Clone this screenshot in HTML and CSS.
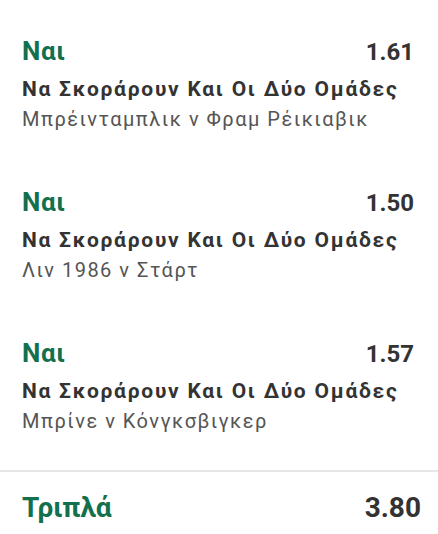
FILE: index.html
```html
<!DOCTYPE html>
<html lang="el">
<head>
  <meta charset="UTF-8">
  <meta name="viewport" content="width=device-width, initial-scale=1.0">
  <title>Δελτίο</title>
  <link rel="stylesheet" href="styles.css">
</head>
<body>
  <div class="bets">
    <div class="bet">
      <div class="bet-top">
        <span class="pick">Ναι</span>
        <span class="odds">1.61</span>
      </div>
      <div class="market">Να Σκοράρουν Και Οι Δύο Ομάδες</div>
      <div class="match">Μπρέινταμπλικ ν Φραμ Ρέικιαβικ</div>
    </div>
    <div class="bet">
      <div class="bet-top">
        <span class="pick">Ναι</span>
        <span class="odds">1.50</span>
      </div>
      <div class="market">Να Σκοράρουν Και Οι Δύο Ομάδες</div>
      <div class="match">Λιν 1986 ν Στάρτ</div>
    </div>
    <div class="bet">
      <div class="bet-top">
        <span class="pick">Ναι</span>
        <span class="odds">1.57</span>
      </div>
      <div class="market">Να Σκοράρουν Και Οι Δύο Ομάδες</div>
      <div class="match">Μπρίνε ν Κόνγκσβιγκερ</div>
    </div>
  </div>
  <div class="total">
    <span class="total-name">Τριπλά</span>
    <span class="total-odds">3.80</span>
  </div>
</body>
</html>
```

FILE: styles.css
```css
body {
  margin: 0;
  background-color: #ffffff;
  font-family: Roboto, 'Noto Sans', sans-serif;
  color: #333333;
}

.bets {
  padding: 36px 24px 35px 22px;
  border-bottom: 2px solid #e6e6e6;
}

.bet + .bet {
  margin-top: 54px;
}

.bet-top {
  display: flex;
  justify-content: space-between;
  align-items: baseline;
  line-height: 30px;
}

.pick {
  font-size: 26px;
  font-weight: bold;
  letter-spacing: 0.6px;
  color: #13704f;
}

.odds {
  font-size: 24px;
  font-weight: bold;
}

.market {
  margin-top: 8px;
  font-size: 21px;
  font-weight: bold;
  line-height: 28px;
  letter-spacing: 1.75px;
}

.match {
  margin-top: 2px;
  font-size: 20px;
  line-height: 28px;
  letter-spacing: 1.5px;
  color: #555555;
}

.total {
  display: flex;
  justify-content: space-between;
  align-items: baseline;
  padding: 19px 17px 0 22px;
  line-height: 34px;
}

.total-name {
  font-size: 28px;
  font-weight: bold;
  color: #13704f;
}

.total-odds {
  font-size: 28px;
  font-weight: bold;
}
```
